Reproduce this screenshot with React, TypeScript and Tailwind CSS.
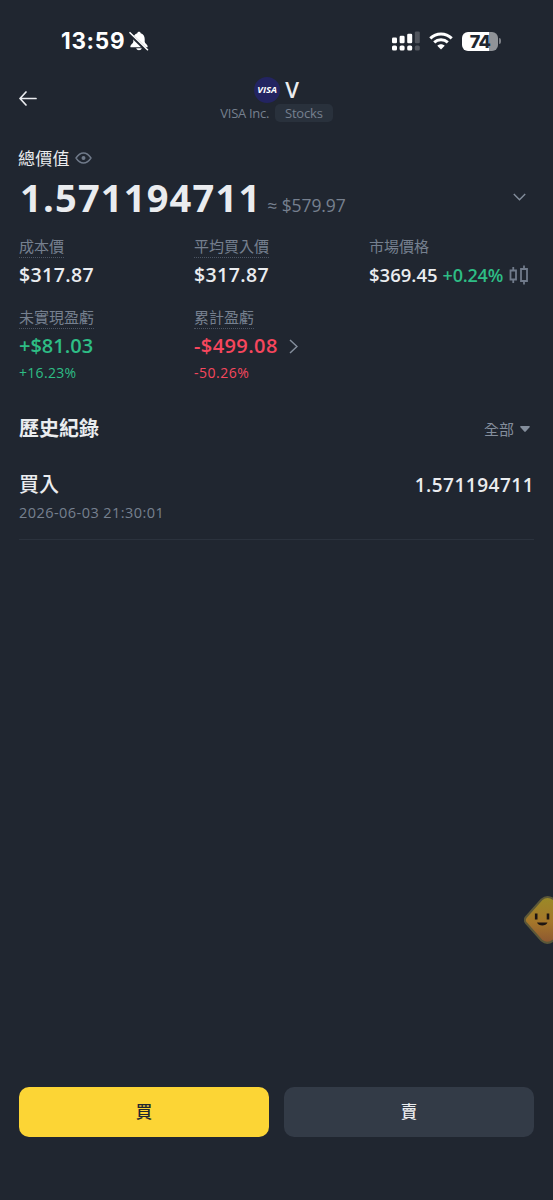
import { ReactNode } from "react";
import clsx from "clsx";

const buttons = [
  { label: "買", className: "bg-[#fcd535] text-[#202630]" },
  { label: "賣", className: "bg-[#333b47] text-[#eaecef]" },
];

function StatusBar() {
  return (
    <div className="flex h-[82px] items-center pl-[61px] pr-[52px] text-white">
      <span className="font-['Inter'] text-[22.500px] font-bold tracking-[0.7px]">
        13:59
      </span>
      <svg className="ml-[4px] h-5 w-5" viewBox="0 0 20 20" fill="none">
        <path
          d="M10 .8c-.9 0-1.6.6-1.7 1.4C5.8 3 4.3 5 4.3 8v2.7c0 1.7-3 3-3 4.7 0 .6.4.9 1 .9h15.4c.6 0 1-.3 1-.9 0-1.7-3-3-3-4.7V8c0-3-1.5-5-4-5.8C11.6 1.4 10.9.8 10 .8ZM7.200 17.3c.3 1.2 1.5 2 2.8 2s2.5-.8 2.8-2Z"
          fill="currentColor"
        />
        <path d="M0 2.200 18 19.700" stroke="#202630" strokeWidth="3.400" />
        <path
          d="M1 1.700 18.500 18.700"
          stroke="currentColor"
          strokeWidth="1.600"
          strokeLinecap="round"
        />
      </svg>
      <svg
        className="mr-px ml-auto h-5 w-7"
        viewBox="0 0 28 20"
        fill="currentColor"
      >
        <rect x="0" y="6.500" width="5" height="5.700" rx="1.300" />
        <rect x="7.600" y="4.700" width="5" height="7.500" rx="1.300" />
        <rect x="15.200" y="2.700" width="5" height="9.500" rx="1.300" />
        <rect x="22.800" y=".5" width="5" height="11.700" rx="1.300" opacity=".22" />
        <rect x="0" y="14.500" width="5" height="5" rx="1.600" />
        <rect x="7.600" y="14.500" width="5" height="5" rx="1.600" />
        <rect x="15.200" y="14.500" width="5" height="5" rx="1.600" />
        <rect x="22.800" y="14.500" width="5" height="5" rx="1.600" opacity=".22" />
      </svg>
      <svg className="ml-[8px] h-[18px] w-6" viewBox="0 0 24 18" fill="none">
        <path
          d="M1.300 6.300C7.300.5 16.700.5 22.700 6.300"
          stroke="currentColor"
          strokeWidth="3"
        />
        <path
          d="M5.200 10.400c3.800-3.600 9.800-3.600 13.600 0"
          stroke="currentColor"
          strokeWidth="2.900"
        />
        <path
          d="M8.300 13.700c2-2 5.400-2 7.400 0L12 17.500Z"
          fill="currentColor"
        />
      </svg>
      <div className="ml-[9px] flex items-center">
        <div className="flex h-[19px] w-[36px] items-center justify-center rounded-[6px] bg-linear-to-r from-white from-74% to-[#909398] to-74% font-['Inter'] text-[18px] leading-[19px] font-extrabold tracking-[-0.8px] text-[#202630]">
          74
        </div>
        <div className="ml-px h-[6px] w-[2px] rounded-r-full bg-[#7b7f86]" />
      </div>
    </div>
  );
}

function Header() {
  return (
    <div className="grid h-[58px] grid-cols-[40px_1fr_40px] items-start px-[19px]">
      <svg
        className="mt-[9px] h-[15px] w-[18px]"
        viewBox="0 0 18 15"
        fill="none"
        stroke="#eaecef"
        strokeWidth="1.700"
        strokeLinecap="round"
        strokeLinejoin="round"
      >
        <path d="M17 7.500H1.200M7 1 1 7.500 7 14" />
      </svg>
      <div className="-mt-[5px] flex flex-col items-center">
        <div className="flex h-[26px] items-center gap-[5px]">
          <div className="flex size-[26px] items-center justify-center rounded-full bg-[#232461] text-[9.500px] font-bold italic text-white">
            VISA
          </div>
          <span className="-mt-[2px] text-[22px] font-semibold text-[#eaecef]">
            V
          </span>
        </div>
        <div className="mt-px flex items-center gap-[6px] text-[13px] leading-[18px] text-[#76808f]">
          <span className="-mt-px tracking-[-0.3px]">VISA Inc.</span>
          <span className="rounded-[5px] bg-[#29313c] px-[10px] tracking-[-0.2px]">
            Stocks
          </span>
        </div>
      </div>
    </div>
  );
}

function Label({ children, dotted }: { children: ReactNode; dotted?: boolean }) {
  return (
    <div className="h-[26px]">
      <span
        className={clsx(
          "inline-block h-[21px] text-[15px] leading-[18px] text-[#76808f]",
          dotted && "border-b border-dotted border-[#4c5563]"
        )}
      >
        {children}
      </span>
    </div>
  );
}

function Value({ children }: { children: ReactNode }) {
  return (
    <div className="text-[19.500px] leading-[30px] font-[580] tracking-[0.400px] text-[#eaecef]">
      {children}
    </div>
  );
}

function Summary() {
  return (
    <div className="px-[19px]">
      <div className="flex h-9 items-center text-[17px] text-[#eaecef]">
        <span className="-ml-px pt-[2px] tracking-[0.2px]">總價值</span>
        <svg
          className="ml-[5px] h-[12px] w-[17px]"
          viewBox="0 0 17 12"
          fill="none"
          stroke="#707a8a"
          strokeWidth="1.400"
          strokeLinejoin="round"
        >
          <path d="M1 6c2-3 4.500-5 7.500-5S14 3 16 6c-2 3-4.500 5-7.500 5S3 9 1 6Z" />
          <circle cx="8.500" cy="6" r="1.300" fill="#707a8a" />
        </svg>
      </div>
      <div className="flex h-[44px] items-center">
        <div className="-mt-[2px] flex items-baseline">
          <span className="ml-px text-[38px] leading-[44px] font-bold tracking-[1.200px] text-[#eaecef]">
            1.571194711
          </span>
          <span className="ml-[6px] text-[17.500px] tracking-[-0.1px] text-[#76808f]">
            ≈ $579.97
          </span>
        </div>
        <svg
          className="-mt-[2px] mr-[8px] ml-auto h-[8px] w-[13px]"
          viewBox="0 0 13 8"
          fill="none"
          stroke="#848e9c"
          strokeWidth="1.400"
        >
          <path d="m.8 1 5.700 5.800L12.200 1" />
        </svg>
      </div>

      <div className="mt-[14px] grid grid-cols-[175px_175px_1fr]">
        <div>
          <Label dotted>成本價</Label>
          <Value>$317.87</Value>
        </div>
        <div>
          <Label dotted>平均買入價</Label>
          <Value>$317.87</Value>
        </div>
        <div>
          <Label>市場價格</Label>
          <div className="flex items-center whitespace-nowrap">
            <span className="text-[18.500px] leading-[30px] font-[580] text-[#eaecef]">
              $369.45
            </span>
            <span className="ml-[5px] text-[18px] font-[550] tracking-[-0.200px] text-[#2ebd85]">
              +0.24%
            </span>
            <svg
              className="ml-[6px] h-5 w-5 shrink-0"
              viewBox="0 0 20 20"
              fill="none"
              stroke="#707a8a"
              strokeWidth="1.800"
            >
              <path d="M1.500 5.500h5.500v9H1.500zM4.250 2v3.500M4.250 14.500V18M12 4h6v12h-6zM15 .5V4M15 16v3.500" />
            </svg>
          </div>
        </div>
      </div>

      <div className="mt-[15px] grid grid-cols-[175px_1fr]">
        <div className="text-[#2ebd85]">
          <Label dotted>未實現盈虧</Label>
          <div className="text-[20px] leading-[30px] font-[550]">+$81.03</div>
          <div className="text-[14px] leading-[23px] font-[450] tracking-[0.300px]">
            +16.23%
          </div>
        </div>
        <div className="text-[#f6465d]">
          <Label dotted>累計盈虧</Label>
          <div className="flex items-center text-[20px] leading-[30px] font-[550] tracking-[0.400px]">
            <span>-$499.08</span>
            <svg
              className="ml-[11px] h-[15px] w-[9px]"
              viewBox="0 0 9 15"
              fill="none"
              stroke="#848e9c"
              strokeWidth="1.500"
            >
              <path d="m1 1 7 6.500L1 14" />
            </svg>
          </div>
          <div className="text-[14px] leading-[23px] font-[450] tracking-[0.500px]">
            -50.26%
          </div>
        </div>
      </div>
    </div>
  );
}

function History() {
  return (
    <div className="px-[19px]">
      <div className="flex h-[30px] items-center justify-between">
        <h2 className="text-[20px] font-bold text-[#eaecef]">歷史紀錄</h2>
        <div className="flex items-center gap-[6px] pr-[4px] text-[15px] text-[#848e9c]">
          全部
          <svg className="h-[6px] w-[10px]" viewBox="0 0 10 6" fill="#848e9c">
            <path d="M1 0h8c.8 0 1.200.8.6 1.300L5.700 5.600c-.4.4-1 .4-1.400 0L.4 1.300C-.2.8.2 0 1 0Z" />
          </svg>
        </div>
      </div>
      <div className="mt-[25px] h-[71px] border-b border-[#2b323d]">
        <div className="flex h-[32px] items-center justify-between text-[#eaecef]">
          <span className="text-[20px] font-medium">買入</span>
          <span className="text-[19px] font-[550] tracking-[0.500px]">
            1.571194711
          </span>
        </div>
        <div className="text-[14.500px] leading-[24px] tracking-[0.450px] text-[#76808f]">
          2026-06-03 21:30:01
        </div>
      </div>
    </div>
  );
}

function Mascot() {
  return (
    <svg
      className="absolute top-[895px] right-0 h-[50px] w-[29px]"
      viewBox="0 0 29 50"
    >
      <defs>
        <linearGradient id="mascot" x1="0" y1="0" x2="0" y2="1">
          <stop offset="0" stopColor="#9a8a27" />
          <stop offset=".55" stopColor="#a5762a" />
          <stop offset="1" stopColor="#8c5731" />
        </linearGradient>
      </defs>
      <path
        d="M17.500 4.500Q23.500-.5 30 4.500L49 22Q51 25 49 28L30 45Q23.500 50.500 17.500 45.500L2 28Q-.5 25 2 22Z"
        fill="url(#mascot)"
        stroke="#5b5738"
        strokeWidth="2"
      />
      <path d="M12.200 18.500v6M24 18.500v6" stroke="#1d1512" strokeWidth="2.600" />
      <path d="M13 27.500h10.500c-1.300 4-9.200 4-10.500 0Z" fill="#1d1512" />
    </svg>
  );
}

function App() {
  return (
    <div className="relative flex h-[1200px] w-full flex-col overflow-hidden bg-[#202630] font-['Open_Sans','Noto_Sans_CJK_TC',sans-serif]">
      <StatusBar />
      <Header />
      <Summary />
      <div className="h-[30px]" />
      <History />
      <div className="mt-auto grid grid-cols-2 gap-[15px] px-[19px] pb-[63px]">
        {buttons.map((button) => (
          <button
            key={button.label}
            className={clsx(
              "h-[50px] rounded-[10px] text-[16.500px] font-medium",
              button.className
            )}
          >
            {button.label}
          </button>
        ))}
      </div>
      <Mascot />
    </div>
  );
}

export default App;
